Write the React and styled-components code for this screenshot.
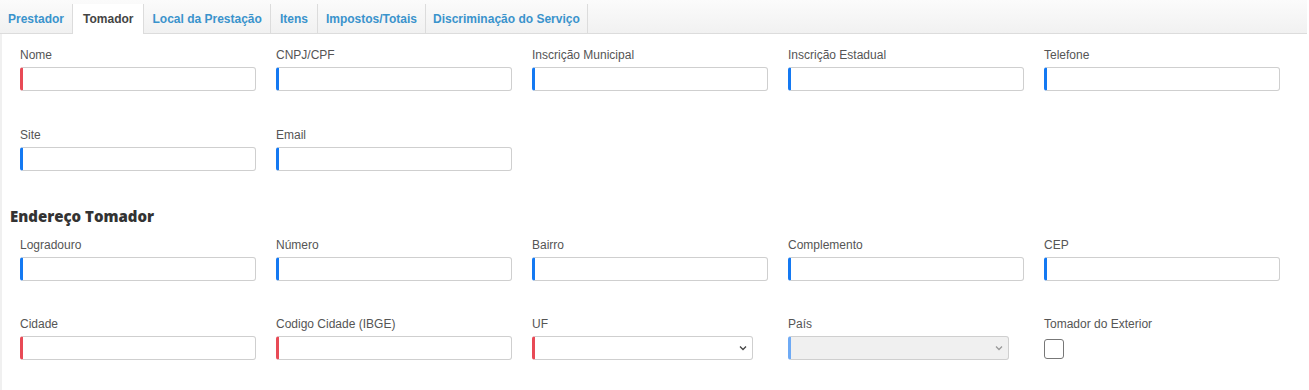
import React from "react";
import styled, { createGlobalStyle } from "styled-components";

const Global = createGlobalStyle`
  html, body { margin: 0; padding: 0; background: #fff; }
  body { font-family: "Liberation Sans", Arial, sans-serif; }
`;

const Page = styled.div`
  width: 1307px;
  border-left: 2px solid #f0f0f0;
  box-sizing: border-box;
  min-height: 390px;
`;

const TabBar = styled.nav`
  display: flex;
  align-items: flex-end;
  height: 34px;
  box-sizing: border-box;
  background: linear-gradient(#fbfbfb, #f1f1f1);
  border-bottom: 1px solid #dcdcdc;
  margin-left: -2px;
`;

const Tab = styled.div`
  box-sizing: border-box;
  display: flex;
  align-items: center;
  padding: 0 ${(p) => p.$pad ?? 8}px;
  border-right: 1px solid #dcdcdc;
  border-left: ${(p) => (p.$active ? "1px solid #dcdcdc" : "none")};
  margin-left: ${(p) => (p.$active ? "-1px" : "0")};
  margin-bottom: ${(p) => (p.$active ? "-1px" : "0")};
  height: ${(p) => (p.$active ? "30px" : "29px")};
  background: ${(p) => (p.$active ? "#fff" : "transparent")};
  color: ${(p) => (p.$active ? "#444" : "#3a93cc")};
  font-family: "Liberation Sans", Arial, sans-serif;
  font-weight: bold;
  font-size: 12px;
  white-space: nowrap;
`;

const Content = styled.div`
  padding: 14px 0 0 0;
`;

const Grid = styled.div`
  display: grid;
  grid-template-columns: repeat(5, 236px);
  column-gap: 20px;
  row-gap: ${(p) => p.$rowGap}px;
  padding-left: 18px;
`;

const Field = styled.div`
  display: flex;
  flex-direction: column;
`;

const Label = styled.label`
  font-size: 12px;
  line-height: 14px;
  color: #555;
  margin-bottom: 5px;
  white-space: nowrap;
`;

const Input = styled.div`
  height: 24px;
  width: ${(p) => p.$w ?? 236}px;
  box-sizing: border-box;
  border: 1px solid #cfcfcf;
  border-left: 3px solid ${(p) => p.$accent};
  border-radius: 3px;
  background: ${(p) => (p.$disabled ? "#f0f0f0" : "#fff")};
  position: relative;
`;

const Chevron = styled.svg`
  position: absolute;
  right: 5px;
  top: 8px;
`;

const Checkbox = styled.div`
  width: 20px;
  height: 20px;
  margin-top: 3px;
  box-sizing: border-box;
  border: 1px solid #777;
  border-radius: 3px;
  background: #fff;
`;

const Heading = styled.h3`
  margin: 35px 0 12px 8px;
  font-family: "Open Sans", sans-serif;
  font-weight: 800;
  font-size: 15px;
  line-height: 20px;
  color: #333;
`;

const RED = "#e84a56";
const BLUE = "#1479f2";
const LIGHTBLUE = "#6eaaf5";

const tabs = [
  ["Prestador", 8],
  ["Tomador", 10],
  ["Local da Prestação", 8],
  ["Itens", 9],
  ["Impostos/Totais", 8],
  ["Discriminação do Serviço", 7],
];

function TextField({ label, accent }) {
  return (
    <Field>
      <Label>{label}</Label>
      <Input $accent={accent} />
    </Field>
  );
}

function SelectField({ label, accent, disabled }) {
  return (
    <Field>
      <Label>{label}</Label>
      <Input $accent={accent} $w={221} $disabled={disabled}>
        <Chevron width="8" height="6" viewBox="0 0 8 6">
          <path
            d="M1 1.5 L4 4.5 L7 1.5"
            fill="none"
            stroke={disabled ? "#999" : "#444"}
            strokeWidth="1.3"
          />
        </Chevron>
      </Input>
    </Field>
  );
}

export default function App() {
  return (
    <>
      <Global />
      <Page>
        <TabBar>
          {tabs.map(([t, pad]) => (
            <Tab key={t} $active={t === "Tomador"} $pad={pad}>
              {t}
            </Tab>
          ))}
        </TabBar>
        <Content>
          <Grid $rowGap={37}>
            <TextField label="Nome" accent={RED} />
            <TextField label="CNPJ/CPF" accent={BLUE} />
            <TextField label="Inscrição Municipal" accent={BLUE} />
            <TextField label="Inscrição Estadual" accent={BLUE} />
            <TextField label="Telefone" accent={BLUE} />
            <TextField label="Site" accent={BLUE} />
            <TextField label="Email" accent={BLUE} />
          </Grid>
          <Heading>Endereço Tomador</Heading>
          <Grid $rowGap={36}>
            <TextField label="Logradouro" accent={BLUE} />
            <TextField label="Número" accent={BLUE} />
            <TextField label="Bairro" accent={BLUE} />
            <TextField label="Complemento" accent={BLUE} />
            <TextField label="CEP" accent={BLUE} />
            <TextField label="Cidade" accent={RED} />
            <TextField label="Codigo Cidade (IBGE)" accent={RED} />
            <SelectField label="UF" accent={RED} />
            <SelectField label="País" accent={LIGHTBLUE} disabled />
            <Field>
              <Label>Tomador do Exterior</Label>
              <Checkbox />
            </Field>
          </Grid>
        </Content>
      </Page>
    </>
  );
}
